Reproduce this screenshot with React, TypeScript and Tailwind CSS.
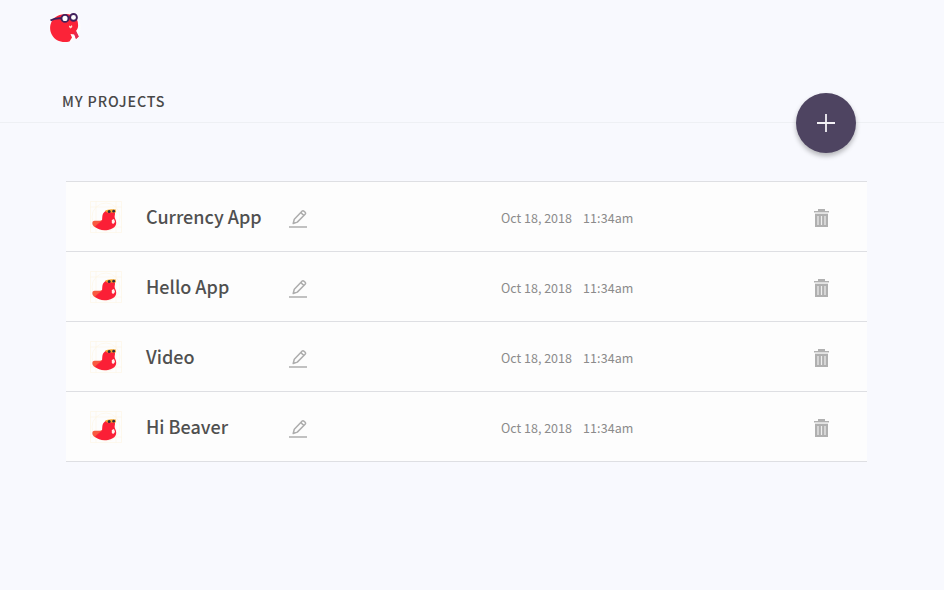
const projects = ["Currency App", "Hello App", "Video", "Hi Beaver"];

function Logo() {
  return (
    <svg width="44" height="44" viewBox="0 0 44 44" aria-hidden="true">
      <circle cx="21" cy="21" r="15.5" fill="#fdfdfd" />
      <path d="M8 15C11 10 16 8.200 22 8C29 8 34 12 34 18C34.500 21 33.500 23 32 25L34.700 30.500L32 33L30.500 28.500L26.500 28L28 31.500L25.500 35.500C18 37.500 11 34.500 8 29C5.500 24.500 5.500 19 8 15Z" fill="#fb2338" />
      <path d="M31 25.500L32 25L34.700 30.500L32 33L30.300 28.500Z" fill="#e52b52" />
      <path d="M25 19.500L26.500 20.300L28 19L28.300 21L26.500 22.500L25 21Z" fill="#ffd9cc" />
      <path d="M6.500 14.500Q11 11.500 18 12.300" fill="none" stroke="#40205c" strokeWidth="2" />
      <circle cx="21" cy="12.400" r="3.500" fill="#fff" stroke="#40205c" strokeWidth="1.900" />
      <circle cx="29.500" cy="11.400" r="3.400" fill="#fff" stroke="#40205c" strokeWidth="1.900" />
    </svg>
  );
}

function Beaver() {
  return (
    <svg width="32" height="32" viewBox="0 0 32 32" aria-hidden="true">
      <g fill="none" stroke="#fdf3dd" strokeWidth=".5">
        <path d="M.5 .5H31.500V31.500H.5ZM.5 6H31.500M.5 26H31.500M6 .5V31.500M26 .5V31.500" />
        <circle cx="16" cy="16" r="14" />
      </g>
      <path d="M2.500 21C4 18.500 8 21 12 19L14 26L10 28C5 27 1.500 24.500 2.500 21Z" fill="#f8593f" />
      <path d="M12 19.500C12.500 17 11.800 13.500 14 11.500C16 8 23 8 25 11.500C25.300 14 24 15.500 25 17.500C28 23 25.500 27.500 18 29C12 29.800 8 28.500 5 25.500Q9 22 12 19.500Z" fill="#fb1f36" />
      <path d="M21.800 19L24 18L25 21L23.200 23L21.800 22Z" fill="#fff0ee" />
      <path d="M15 9.700Q18 7.500 25.800 8.500V11.500H17Z" fill="#f7a928" />
      <circle cx="19.200" cy="10.500" r="1.500" fill="#2d2d3d" />
      <circle cx="23.700" cy="10.200" r="1.400" fill="#2d2d3d" />
    </svg>
  );
}

function EditIcon() {
  return (
    <svg width="18" height="18" viewBox="0 0 18 18" fill="none" stroke="#adadad" aria-hidden="true">
      <path d="M0 17H18" strokeWidth="1.500" />
      <path d="M4.200 13.500L5.300 9.200L13 1.200Q14 .4 15.100 1.300L16.100 2.300Q17 3.300 16.100 4.300L8.300 12.100ZM11.800 2.500L14.900 5.600" strokeWidth="1.500" strokeLinejoin="round" />
    </svg>
  );
}

function TrashIcon() {
  return (
    <svg width="15" height="18" viewBox="0 0 15 18" aria-hidden="true">
      <path d="M4 0H11V2H15V3.500H0V2H4Z" fill="#b0b0b0" />
      <path d="M1 3.500H14V5H1Z" fill="#e4e4e4" />
      <path d="M1 5H14V18H1Z" fill="#b0b0b0" />
      <path d="M4 7V16M7.500 7V16M11 7V16" stroke="#eee" strokeWidth="1.200" />
    </svg>
  );
}

export default function App() {
  return (
    <div className="h-[590px] w-[944px] overflow-hidden bg-[#f8f9fe] font-['Noto_Sans_CJK_SC',sans-serif]">
      <header className="flex h-[123px] border-b border-[#eef0f4]">
        <div className="flex w-[796px] flex-col">
          <div className="pt-[6px] pl-[44px]"><Logo /></div>
          <h1 className="mt-[39px] pl-[62px] text-[14.300px] leading-6 font-medium tracking-[0.850px] text-[#484848]">MY PROJECTS</h1>
        </div>
        <button aria-label="New project" className="mt-[93px] flex size-[60px] shrink-0 items-center justify-center rounded-full bg-[#4e4461] shadow-[0_3px_5px_rgba(0,0,0,0.28)]">
          <svg width="18" height="18" viewBox="0 0 18 18" stroke="#f3f1f5" strokeWidth="1.800"><path d="M9 0V18M0 9H18" /></svg>
        </button>
      </header>
      <main className="mt-[58px] ml-[66px] w-[801px] border-t border-[#dedfe3]">
        {projects.map((name) => (
          <div key={name} className="flex h-[70px] items-center border-b border-[#dedfe3] bg-[#fdfdfd]">
            <div className="ml-[24px] w-[56px]"><Beaver /></div>
            <h2 className="w-[143px] pb-[2px] text-[18px] leading-7 font-medium whitespace-nowrap text-[#505050]">{name}</h2>
            <button aria-label="Edit" className="mt-[4px] w-[212px]"><EditIcon /></button>
            <div className="flex w-[313px] pt-[3px] text-[12.500px] leading-5 whitespace-nowrap text-[#8b8b8b]">
              <span className="w-[82px]">Oct 18, 2018</span>
              <span className="tracking-[0.100px]">11:34am</span>
            </div>
            <button aria-label="Delete" className="mt-[2px]"><TrashIcon /></button>
          </div>
        ))}
      </main>
    </div>
  );
}
